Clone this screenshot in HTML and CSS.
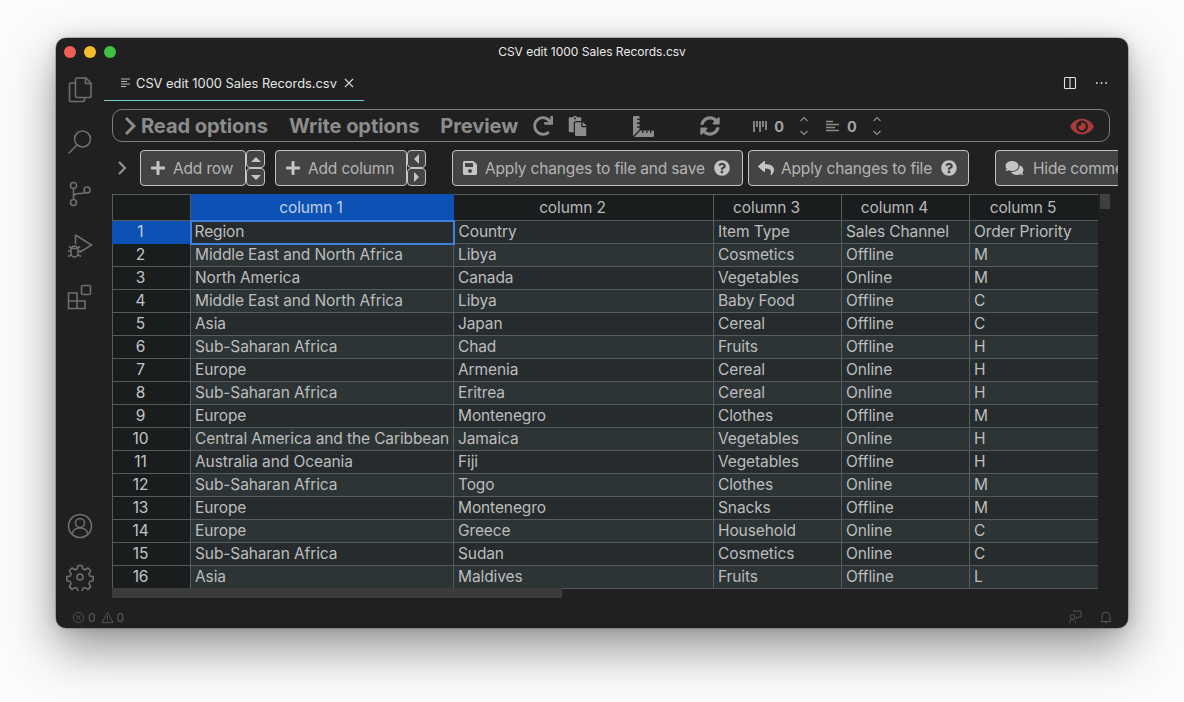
FILE: index.html
```html
<!DOCTYPE html>
<html lang="en">
<head>
<meta charset="utf-8">
<title>CSV edit 1000 Sales Records.csv</title>
<link rel="stylesheet" href="styles.css">
</head>
<body>
<div class="window">
  <header class="titlebar">
    <div class="lights"><span class="light red"></span><span class="light yellow"></span><span class="light green"></span></div>
    <div class="title">CSV edit 1000 Sales Records.csv</div>
  </header>
  <div class="main">
    <nav class="activity">
      <div class="act"><svg class="aicon aicon-files" viewBox="0 0 28 28"><path d="M11 3h9l5 5v13a1.500 1.500 0 0 1-1.500 1.500H11A1.500 1.500 0 0 1 9.500 21V4.500A1.500 1.500 0 0 1 11 3zM19.500 3v5.500H25M9.500 8H5a1.500 1.500 0 0 0-1.500 1.500V25A1.500 1.500 0 0 0 5 26.500h12a1.500 1.500 0 0 0 1.500-1.500v-2.500"/></svg></div>
      <div class="act"><svg class="aicon" viewBox="0 0 28 28"><circle cx="16.500" cy="11" r="8"/><path d="M11 17L2.500 25.500"/></svg></div>
      <div class="act"><svg class="aicon" viewBox="0 0 28 28"><circle cx="7.500" cy="5.500" r="3"/><circle cx="7.500" cy="22.500" r="3"/><circle cx="21" cy="10" r="3"/><path d="M7.500 8.500v11M7.500 17c0-3 3-3.500 6-3.500 3 0 5-.5 6-1"/></svg></div>
      <div class="act"><svg class="aicon" viewBox="0 0 28 28"><path d="M9.500 3l16 10-12 7.500M9.500 3v9"/><path d="M5 16.500h7v5a3.500 3.500 0 0 1-7 0zM6 16.500a2.500 2.500 0 0 1 5 0M5 19H2M12 19h3M5 23l-3 1.500M12 23l3 1.500M5.500 16L3 14.500M11.500 16l2.500-1.500"/></svg></div>
      <div class="act"><svg class="aicon" viewBox="0 0 28 28"><path d="M2.500 10h8.500v8h8v7.500H2.500zM2.500 18H11v7.500"/><rect x="15.500" y="2.500" width="9" height="9" rx="1.500"/></svg></div>
      <div class="act act-push"><svg class="aicon" viewBox="0 0 28 28"><circle cx="14" cy="14" r="11.500"/><circle cx="14" cy="11" r="4.500"/><path d="M6 22.500c.5-4 4-6.500 8-6.500s7.500 2.500 8 6.500"/></svg></div>
      <div class="act"><svg class="aicon" viewBox="0 0 28 28"><path d="M12 2.500h4l.7 3.300 2.300 1 2.900-1.800 2.800 2.800-1.800 2.900 1 2.300 3.300.7v4l-3.300.7-1 2.300 1.800 2.900-2.800 2.800-2.900-1.800-2.300 1-.7 3.300h-4l-.7-3.300-2.300-1-2.900 1.800-2.800-2.800 1.800-2.900-1-2.300-3.300-.7v-4l3.300-.7 1-2.300-1.800-2.900 2.800-2.800 2.900 1.800 2.300-1z"/><circle cx="14" cy="14" r="3"/></svg></div>
    </nav>
    <section class="editor">
      <div class="tabbar">
        <div class="tab">
          <svg class="tab-lines" viewBox="0 0 10 10"><path d="M0 1h9M0 3.500h6M0 6h9M0 8.500h5"/></svg>
          <span class="tab-name">CSV edit 1000 Sales Records.csv</span>
          <svg class="tab-close" viewBox="0 0 10 10"><path d="M1 1l8 8M9 1l-8 8"/></svg>
        </div>
        <div class="tab-actions">
          <svg class="split" viewBox="0 0 14 14"><rect x="1.500" y="1.500" width="11" height="11" rx="1"/><path d="M7 1.500v11"/></svg>
          <svg class="more" viewBox="0 0 14 4"><circle cx="2" cy="2" r="1"/><circle cx="7" cy="2" r="1"/><circle cx="12" cy="2" r="1"/></svg>
        </div>
      </div>
      <div class="toolbar">
        <svg class="tb-chevron" viewBox="0 0 12 20"><path d="M2 2l8 8-8 8"/></svg>
        <span class="tb-title tb-read">Read options</span>
        <span class="tb-title tb-write">Write options</span>
        <span class="tb-title tb-preview">Preview</span>
        <svg class="fa fa-redo" viewBox="0 0 512 512"><path d="M500.33 0h-47.41a12 12 0 0 0-12 12.57l4 82.76A247.42 247.42 0 0 0 256 8C119.34 8 7.9 119.53 8 256.19 8.1 393.07 119.1 504 256 504a247.1 247.1 0 0 0 166.18-63.91 12 12 0 0 0 .48-17.43l-34-34a12 12 0 0 0-16.38-.55A176 176 0 1 1 402.1 157.8l-101.53-4.87a12 12 0 0 0-12.57 12v47.41a12 12 0 0 0 12 12h200.33a12 12 0 0 0 12-12V12a12 12 0 0 0-12-12z"/></svg>
        <svg class="fa fa-paste" viewBox="0 0 448 512"><path d="M128 184c0-30.879 25.122-56 56-56h136V56c0-13.255-10.745-24-24-24h-80.61C204.306 12.89 183.637 0 160 0s-44.306 12.89-55.39 32H24C10.745 32 0 42.745 0 56v336c0 13.255 10.745 24 24 24h104V184zm32-144c13.255 0 24 10.745 24 24s-10.745 24-24 24-24-10.745-24-24 10.745-24 24-24zm184 248h104v200c0 13.255-10.745 24-24 24H184c-13.255 0-24-10.745-24-24V184c0-13.255 10.745-24 24-24h136v104c0 13.2 10.8 24 24 24zm104-38.059V256h-96v-96h6.059a24 24 0 0 1 16.97 7.029l65.941 65.941a24.002 24.002 0 0 1 7.03 16.971z"/></svg>
        <svg class="fa fa-ruler" viewBox="0 0 512 512"><path d="M160 288h-56c-4.420 0-8-3.580-8-8v-16c0-4.420 3.580-8 8-8h56v-64h-56c-4.420 0-8-3.580-8-8v-16c0-4.420 3.580-8 8-8h56V96h-56c-4.420 0-8-3.580-8-8V72c0-4.420 3.580-8 8-8h56V32c0-17.670-14.330-32-32-32H32C14.330 0 0 14.330 0 32v448c0 2.770.91 5.240 1.570 7.800L160 329.380V288zm320 64h-32v56c0 4.420-3.580 8-8 8h-16c-4.420 0-8-3.580-8-8v-56h-64v56c0 4.420-3.580 8-8 8h-16c-4.420 0-8-3.580-8-8v-56h-64v56c0 4.420-3.580 8-8 8h-16c-4.420 0-8-3.580-8-8v-56h-41.370L24.200 510.430c2.560.66 5.040 1.570 7.800 1.570h448c17.670 0 32-14.330 32-32v-96c0-17.670-14.330-32-32-32z"/></svg>
        <svg class="fa fa-sync" viewBox="0 0 512 512"><path d="M370.720 133.280C339.458 104.008 298.888 87.962 255.848 88c-77.458.068-144.328 53.178-162.791 126.850-1.344 5.363-6.122 9.150-11.651 9.150H24.103c-7.498 0-13.194-6.807-11.807-14.176C33.933 94.924 134.813 8 256 8c66.448 0 126.791 26.136 171.315 68.685L463.030 40.970C478.149 25.851 504 36.559 504 57.941V192c0 13.255-10.745 24-24 24H345.941c-21.382 0-32.090-25.851-16.971-40.971l41.750-41.749zM32 296h134.059c21.382 0 32.090 25.851 16.971 40.971l-41.750 41.750c31.262 29.273 71.835 45.319 114.876 45.280 77.418-.07 144.315-53.144 162.787-126.849 1.344-5.363 6.122-9.150 11.651-9.150h57.304c7.498 0 13.194 6.807 11.807 14.176C478.067 417.076 377.187 504 256 504c-66.448 0-126.791-26.136-171.315-68.685L48.970 471.030C33.851 486.149 8 475.441 8 454.059V320c0-13.255 10.745-24 24-24z"/></svg>
        <svg class="mini mini-cols" viewBox="0 0 14 13"><path d="M1 1v11M4 1v6M7 1v11M10 1v6M13 1v9"/></svg>
        <span class="count">0</span>
        <svg class="updown" viewBox="0 0 10 22"><path d="M1.500 6L5 2.500 8.500 6M1.500 16L5 19.500 8.500 16"/></svg>
        <svg class="mini mini-rows" viewBox="0 0 14 13"><path d="M0 1.500h7M0 4.500h13M0 7.500h9M0 10.500h13"/></svg>
        <span class="count">0</span>
        <svg class="updown updown-2" viewBox="0 0 10 22"><path d="M1.500 6L5 2.500 8.500 6M1.500 16L5 19.500 8.500 16"/></svg>
        <svg class="fa fa-eye" viewBox="0 0 576 512"><path d="M572.520 241.400C518.290 135.590 410.930 64 288 64S57.680 135.640 3.480 241.410a32.350 32.350 0 0 0 0 29.190C57.710 376.410 165.070 448 288 448s230.320-71.640 284.520-177.410a32.350 32.350 0 0 0 0-29.190zM288 400a144 144 0 1 1 144-144 143.930 143.930 0 0 1-144 144zm0-240a95.310 95.310 0 0 0-25.310 3.790 47.850 47.850 0 0 1-66.900 66.900A95.780 95.780 0 1 0 288 160z"/></svg>
      </div>
      <div class="actions">
        <svg class="act-chevron" viewBox="0 0 10 16"><path d="M2 2l6 6-6 6"/></svg>
        <button class="btn btn-addrow"><svg class="bicon" viewBox="0 0 448 512"><path d="M416 208H272V64c0-17.670-14.330-32-32-32h-32c-17.670 0-32 14.330-32 32v144H32c-17.670 0-32 14.330-32 32v32c0 17.670 14.330 32 32 32h144v144c0 17.670 14.330 32 32 32h32c17.670 0 32-14.330 32-32V304h144c17.670 0 32-14.330 32-32v-32c0-17.670-14.330-32-32-32z"/></svg>Add row</button>
        <div class="stack">
          <button class="sbtn"><span class="tri tri-up"></span></button>
          <button class="sbtn"><span class="tri tri-down"></span></button>
        </div>
        <button class="btn btn-addcol"><svg class="bicon" viewBox="0 0 448 512"><path d="M416 208H272V64c0-17.670-14.330-32-32-32h-32c-17.670 0-32 14.330-32 32v144H32c-17.670 0-32 14.330-32 32v32c0 17.670 14.330 32 32 32h144v144c0 17.670 14.330 32 32 32h32c17.670 0 32-14.330 32-32V304h144c17.670 0 32-14.330 32-32v-32c0-17.670-14.330-32-32-32z"/></svg>Add column</button>
        <div class="stack">
          <button class="sbtn"><span class="tri tri-left"></span></button>
          <button class="sbtn"><span class="tri tri-right"></span></button>
        </div>
        <button class="btn btn-save"><svg class="bicon" viewBox="0 0 448 512"><path d="M433.941 129.941l-83.882-83.882A48 48 0 0 0 316.118 32H48C21.490 32 0 53.490 0 80v352c0 26.510 21.490 48 48 48h352c26.510 0 48-21.490 48-48V163.882a48 48 0 0 0-14.059-33.941zM224 416c-35.346 0-64-28.654-64-64 0-35.346 28.654-64 64-64s64 28.654 64 64c0 35.346-28.654 64-64 64zm96-304.520V212c0 6.627-5.373 12-12 12H76c-6.627 0-12-5.373-12-12V108c0-6.627 5.373-12 12-12h228.520c3.183 0 6.235 1.264 8.485 3.515l3.480 3.480A11.996 11.996 0 0 1 320 111.480z"/></svg>Apply changes to file and save<svg class="help" viewBox="0 0 512 512"><path d="M504 256c0 136.997-111.043 248-248 248S8 392.997 8 256C8 119.083 119.043 8 256 8s248 111.083 248 248zM262.655 90c-54.497 0-89.255 22.957-116.549 63.758-3.536 5.286-2.353 12.415 2.715 16.258l34.699 26.310c5.205 3.947 12.621 3.008 16.665-2.122 17.864-22.658 30.113-35.797 57.303-35.797 20.429 0 45.698 13.148 45.698 32.958 0 14.976-12.363 22.667-32.534 33.976C247.128 238.528 216 254.941 216 296v4c0 6.627 5.373 12 12 12h56c6.627 0 12-5.373 12-12v-1.333c0-28.462 83.186-29.647 83.186-106.667 0-58.002-60.165-102-116.531-102zM256 338c-25.365 0-46 20.635-46 46 0 25.364 20.635 46 46 46s46-20.636 46-46c0-25.365-20.635-46-46-46z"/></svg></button>
        <button class="btn btn-file"><svg class="bicon bicon-reply" viewBox="0 0 512 512"><path d="M8.309 189.836L184.313 37.851C199.719 24.546 224 35.347 224 56.015v80.053c160.629 1.839 288 34.032 288 186.258 0 61.441-39.581 122.309-83.333 154.132-13.653 9.931-33.111-2.533-28.077-18.631 45.344-145.012-21.507-183.510-176.590-185.742V360c0 20.700-24.300 31.453-39.687 18.164l-176.004-152c-11.071-9.562-11.086-26.753 0-36.328z"/></svg>Apply changes to file<svg class="help" viewBox="0 0 512 512"><path d="M504 256c0 136.997-111.043 248-248 248S8 392.997 8 256C8 119.083 119.043 8 256 8s248 111.083 248 248zM262.655 90c-54.497 0-89.255 22.957-116.549 63.758-3.536 5.286-2.353 12.415 2.715 16.258l34.699 26.310c5.205 3.947 12.621 3.008 16.665-2.122 17.864-22.658 30.113-35.797 57.303-35.797 20.429 0 45.698 13.148 45.698 32.958 0 14.976-12.363 22.667-32.534 33.976C247.128 238.528 216 254.941 216 296v4c0 6.627 5.373 12 12 12h56c6.627 0 12-5.373 12-12v-1.333c0-28.462 83.186-29.647 83.186-106.667 0-58.002-60.165-102-116.531-102zM256 338c-25.365 0-46 20.635-46 46 0 25.364 20.635 46 46 46s46-20.636 46-46c0-25.365-20.635-46-46-46z"/></svg></button>
        <button class="btn btn-comments"><svg class="bicon bicon-wide" viewBox="0 0 576 512"><path d="M416 192c0-88.400-93.100-160-208-160S0 103.600 0 192c0 34.300 14.100 65.900 38 92-13.400 30.200-35.500 54.200-35.800 54.500-2.200 2.300-2.800 5.700-1.500 8.700S4.800 352 8 352c36.600 0 66.900-12.300 88.700-25 32.200 15.700 70.300 25 111.300 25 114.900 0 208-71.600 208-160zm122 220c23.900-26 38-57.700 38-92 0-66.900-53.500-124.200-129.300-148.100.9 6.600 1.300 13.300 1.300 20.100 0 105.900-107.700 192-240 192-10.800 0-21.300-.8-31.700-1.900C207.800 439.600 281.800 480 368 480c41 0 79.100-9.200 111.300-25 21.800 12.700 52.100 25 88.700 25 3.200 0 6.100-1.900 7.300-4.800 1.300-2.900.7-6.300-1.500-8.700-.3-.3-22.400-24.200-35.800-54.500z"/></svg>Hide comments</button>
      </div>
      <div class="grid-row">
        <div class="grid-wrap">
          <table class="grid">
            <colgroup><col class="c0"><col class="c1"><col class="c2"><col class="c3"><col class="c4"><col class="c5"></colgroup>
            <thead>
              <tr><th></th><th class="sel">column 1</th><th>column 2</th><th>column 3</th><th>column 4</th><th>column 5</th></tr>
            </thead>
            <tbody>
              <tr><th class="sel">1</th><td class="active">Region</td><td>Country</td><td>Item Type</td><td>Sales Channel</td><td>Order Priority</td></tr>
              <tr><th>2</th><td>Middle East and North Africa</td><td>Libya</td><td>Cosmetics</td><td>Offline</td><td>M</td></tr>
              <tr><th>3</th><td>North America</td><td>Canada</td><td>Vegetables</td><td>Online</td><td>M</td></tr>
              <tr><th>4</th><td>Middle East and North Africa</td><td>Libya</td><td>Baby Food</td><td>Offline</td><td>C</td></tr>
              <tr><th>5</th><td>Asia</td><td>Japan</td><td>Cereal</td><td>Offline</td><td>C</td></tr>
              <tr><th>6</th><td>Sub-Saharan Africa</td><td>Chad</td><td>Fruits</td><td>Offline</td><td>H</td></tr>
              <tr><th>7</th><td>Europe</td><td>Armenia</td><td>Cereal</td><td>Online</td><td>H</td></tr>
              <tr><th>8</th><td>Sub-Saharan Africa</td><td>Eritrea</td><td>Cereal</td><td>Online</td><td>H</td></tr>
              <tr><th>9</th><td>Europe</td><td>Montenegro</td><td>Clothes</td><td>Offline</td><td>M</td></tr>
              <tr><th>10</th><td>Central America and the Caribbean</td><td>Jamaica</td><td>Vegetables</td><td>Online</td><td>H</td></tr>
              <tr><th>11</th><td>Australia and Oceania</td><td>Fiji</td><td>Vegetables</td><td>Offline</td><td>H</td></tr>
              <tr><th>12</th><td>Sub-Saharan Africa</td><td>Togo</td><td>Clothes</td><td>Online</td><td>M</td></tr>
              <tr><th>13</th><td>Europe</td><td>Montenegro</td><td>Snacks</td><td>Offline</td><td>M</td></tr>
              <tr><th>14</th><td>Europe</td><td>Greece</td><td>Household</td><td>Online</td><td>C</td></tr>
              <tr><th>15</th><td>Sub-Saharan Africa</td><td>Sudan</td><td>Cosmetics</td><td>Online</td><td>C</td></tr>
              <tr><th>16</th><td>Asia</td><td>Maldives</td><td>Fruits</td><td>Offline</td><td>L</td></tr>
            </tbody>
          </table>
          <div class="hscroll"><div class="hthumb"></div></div>
        </div>
        <div class="vscroll"><div class="vthumb"></div></div>
      </div>
    </section>
  </div>
  <footer class="status">
    <svg class="sicon" viewBox="0 0 14 14"><circle cx="7" cy="7" r="5.500"/><path d="M4.800 4.800l4.400 4.400M9.200 4.800l-4.400 4.400"/></svg>
    <span class="snum">0</span>
    <svg class="sicon" viewBox="0 0 14 14"><path d="M7 1.500l6 11H1zM7 5.500v4M7 10.500v1"/></svg>
    <span class="snum">0</span>
    <svg class="sicon sicon-feedback" viewBox="0 0 14 14"><path d="M5 1h8v6h-2.500L8.500 9V7M1.500 13c0-2.200 1.300-3.500 3-3.500s3 1.300 3 3.500"/><circle cx="4.500" cy="7" r="2.300"/></svg>
    <svg class="sicon sicon-bell" viewBox="0 0 14 14"><path d="M3 10.500V6a4 4 0 0 1 8 0v4.500l1 1H2zM6 12.800h2"/></svg>
  </footer>
</div>
</body>
</html>
```

FILE: styles.css
```css
* { box-sizing: border-box; }
html, body { margin: 0; height: 100%; }
body {
  background: #fbfbfb;
  padding: 38px 56px 0;
  overflow: hidden;
  font-family: Inter, "Liberation Sans", sans-serif;
}
.window {
  width: 1072px;
  height: 590px;
  background: #202020;
  border-radius: 10px;
  box-shadow: 0 0 0 .5px rgba(90,90,90,.7), 0 20px 48px rgba(0,0,0,.42), 0 0 14px rgba(0,0,0,.14);
  display: flex;
  flex-direction: column;
  overflow: hidden;
}
.titlebar {
  height: 27px;
  flex: none;
  display: flex;
  align-items: center;
  position: relative;
}
.lights { display: flex; gap: 8px; padding-left: 8px; }
.light { width: 12px; height: 12px; border-radius: 50%; }
.red { background: #ee5f57; }
.yellow { background: #f6bd2e; }
.green { background: #3fc03f; }
.title {
  position: absolute;
  left: 0; right: 0; top: 0;
  line-height: 27px;
  text-align: center;
  font-size: 12px;
  color: #e8e8e8;
}
.main { flex: 1; display: flex; min-height: 0; }
.activity {
  width: 48px;
  flex: none;
  display: flex;
  flex-direction: column;
  padding-bottom: 3px;
}
.act { height: 51.6px; display: flex; align-items: center; justify-content: center; flex: none; }
.act-push { margin-top: auto; }
.aicon {
  width: 28px; height: 28px;
  fill: none;
  stroke: #6b706f;
  stroke-width: 1.6;
}
.aicon-files { margin-top: -3px; }
.editor {
  flex: 1;
  min-width: 0;
  display: flex;
  flex-direction: column;
}
.tabbar { height: 36px; flex: none; display: flex; justify-content: space-between; }
.tab {
  width: 260px;
  height: 36px;
  border-bottom: 1px solid #6fd0cc;
  display: flex;
  align-items: center;
  padding-left: 17px;
  padding-top: 1px;
}
.tab-lines { width: 10px; height: 10px; fill: none; stroke: #bbb; stroke-width: 1; margin-right: 5px; }
.tab-name { font-size: 12.85px; color: #e6e6e6; white-space: nowrap; }
.tab-close { width: 10px; height: 10px; fill: none; stroke: #d6d6d6; stroke-width: 1.1; margin-left: 7px; }
.tab-actions { display: flex; align-items: center; gap: 18px; padding-right: 20px; height: 36px; }
.split { width: 14px; height: 14px; fill: none; stroke: #e4e4e4; stroke-width: 1.1; }
.more { width: 13px; height: 4px; fill: #d4d4d4; }
.toolbar {
  margin: 8px 18px 0 8px;
  height: 33px;
  flex: none;
  border: 1px solid #7d7d7d;
  border-radius: 10px;
  display: flex;
  align-items: center;
  padding: 1px 0 0 11px;
  color: #8c8c8c;
}
.tb-chevron { width: 12px; height: 20px; fill: none; stroke: #8c8c8c; stroke-width: 3; flex: none; margin-right: 5px; }
.tb-title { font-size: 20.1px; font-weight: 700; white-space: nowrap; color: #8c8c8c; letter-spacing: -.1px; margin-bottom: 1px; }
.tb-write { margin-left: 21px; }
.tb-preview { margin-left: 21px; }
.fa { fill: #8c8c8c; flex: none; }
.fa-redo { width: 20px; height: 20px; margin-left: 15px; }
.fa-paste { width: 19px; height: 20px; margin-left: 15px; }
.fa-ruler { width: 21px; height: 21px; margin-left: 46px; }
.fa-sync { width: 20px; height: 20px; margin-left: 46px; }
.mini { fill: none; stroke: #8c8c8c; flex: none; }
.mini-cols { width: 14px; height: 13px; stroke-width: 1.8; margin-left: 33px; }
.mini-rows { width: 14px; height: 13px; stroke-width: 1.6; margin-left: 17px; }
.count { font-size: 14.5px; font-weight: 700; color: #a3a3a3; margin-left: 7px; }
.updown { width: 10px; height: 22px; fill: none; stroke: #8c8c8c; stroke-width: 1.2; margin-left: 15px; flex: none; }
.updown-2 { margin-left: 15px; }
.fa-eye { width: 24px; height: 21px; fill: #ab3a3a; margin-left: auto; margin-right: 15px; }
.actions {
  margin: 8px 10px 0 8px;
  height: 36px;
  flex: none;
  display: flex;
  align-items: stretch;
  overflow: hidden;
}
.act-chevron { width: 10px; height: 16px; fill: none; stroke: #999; stroke-width: 2; flex: none; align-self: center; margin: 0 13px 0 5px; }
.btn {
  display: flex;
  align-items: center;
  background: #444;
  border: 1px solid #c4c4c4;
  border-radius: 4px;
  color: #b4b4b4;
  font: 400 15.5px Inter, "Liberation Sans", sans-serif;
  letter-spacing: -.16px;
  white-space: nowrap;
  padding: 0 0 0 10px;
  flex: none;
}
.bicon { width: 14px; height: 16px; fill: #c4c4c4; margin-right: 8px; flex: none; }
.bicon-reply { width: 16px; height: 16px; margin: 0 7px 0 -1px; }
.bicon-wide { width: 19px; margin-right: 9px; margin-left: -1px; }
.help { width: 16px; height: 16px; fill: #c4c4c4; margin-left: 9px; flex: none; }
.btn-addrow { width: 106px; }
.btn-addcol { width: 132px; margin-left: 10px; }
.btn-save { width: 291px; margin-left: 26px; }
.btn-file { width: 221px; margin-left: 5px; }
.btn-comments { width: 180px; margin-left: 26px; }
.stack { width: 19px; flex: none; display: flex; flex-direction: column; }
.sbtn {
  flex: 1;
  padding: 0;
  background: #444;
  border: 1px solid #c4c4c4;
  border-radius: 4px;
  display: flex;
  align-items: center;
  justify-content: center;
}
.tri { width: 0; height: 0; border-style: solid; border-color: transparent; }
.tri-up { border-width: 0 5px 5px; border-bottom-color: #c4c4c4; }
.tri-down { border-width: 5px 5px 0; border-top-color: #c4c4c4; }
.tri-left { border-width: 5px 5px 5px 0; border-right-color: #c4c4c4; }
.tri-right { border-width: 5px 0 5px 5px; border-left-color: #c4c4c4; }
.grid-row {
  margin: 8px 18px 0 8px;
  height: 404px;
  flex: none;
  display: flex;
}
.grid-wrap { width: 986px; flex: none; overflow: hidden; }
.grid {
  border-collapse: collapse;
  table-layout: fixed;
  width: 986px;
  font-size: 15.5px;
  letter-spacing: -.11px;
  color: #bdbdbd;
}
.c0 { width: 78px; }
.c1 { width: 263px; }
.c2 { width: 260px; }
.c3 { width: 128px; }
.c4 { width: 128px; }
.c5 { width: 129px; }
.grid th, .grid td {
  border: 1px solid #575b5b;
  font-weight: 400;
  padding: 0 0 2px;
  height: 23px;
  line-height: 19px;
  overflow: hidden;
  white-space: nowrap;
}
.grid thead th { height: 26px; background: #1a1d1e; text-align: center; color: #b9b9b9; padding-right: 22px; padding-bottom: 0; }
.grid tbody th { background: #1a1d1e; text-align: center; color: #c4c4c4; padding-right: 22px; }
.grid td { padding: 0 4px 2px; background: #262c2d; color: #bdbdbd; }
.grid tbody tr:nth-child(even) td { background: #2c3435; }
.grid thead th.sel, .grid tbody th.sel { background: #0b52b4; border-color: #0b52b4; color: #c2cfe6; }
.grid tbody tr:first-child td.active { border: 2px solid #3f7fe0; background: #262c2d; padding: 0 3px 1px; }
.hscroll { height: 10px; margin-top: -1px; }
.hthumb { width: 450px; height: 10px; background: #3c3c3c; }
.vscroll { width: 14px; padding-left: 2px; flex: none; }
.vthumb { width: 10px; height: 15px; background: #404040; }
.status {
  height: 22px;
  flex: none;
  display: flex;
  align-items: center;
  padding: 0 15px 0 16px;
  margin-top: auto;
}
.sicon { width: 13px; height: 13px; fill: none; stroke: #555; stroke-width: 1; flex: none; }
.snum { color: #5c5c5c; font-size: 12px; margin: 0 5px 0 3px; }
.sicon-feedback { margin-left: auto; width: 14px; height: 14px; }
.sicon-bell { margin-left: 17px; width: 14px; height: 14px; }
```
